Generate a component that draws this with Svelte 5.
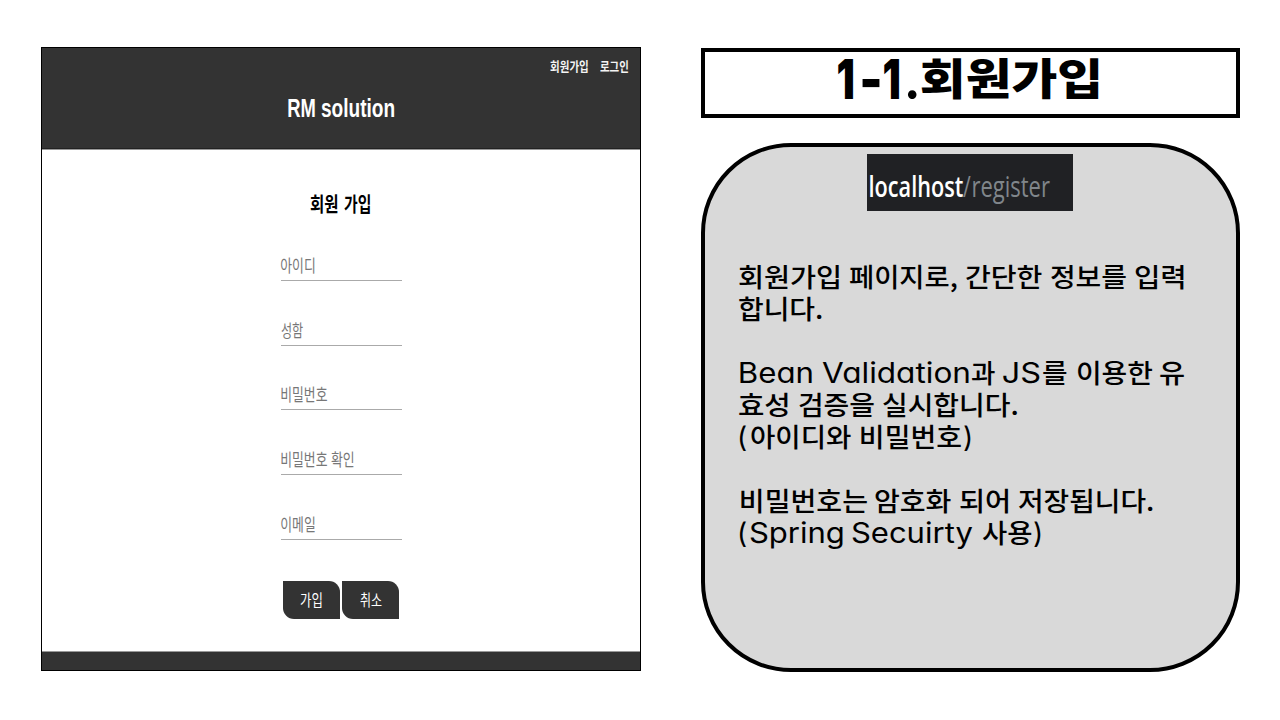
<script>
  // Text runs are [text, left, right, class?], in pixels inside their line.
  const nav = [['회원가입', 508, 546], ['로그인', 558, 586]];
  const brand = [['RM', 245.5, 272.5], ['solution', 279, 352]];
  const formTitle = [['회원', 268, 296], ['가입', 301.5, 327.5]];
  const fields = [
    [['아이디', 0, 33.5]],
    [['성함', 0, 22.5]],
    [['비밀번호', 0, 46]],
    [['비밀번호', 0, 46], ['확인', 50, 72.5]],
    [['이메일', 0, 33.5]],
  ];
  const buttons = [[['가입', 17, 38.5]], [['취소', 17.5, 39]]];
  const heading = [
    ['1', 132.5, 148, 'num'],
    ['-', 157, 175, 'num'],
    ['1', 179, 194.5, 'num'],
    ['.', 203, 212.5, 'dot'],
    ['회원가입', 216, 394, 'ko'],
  ];
  const address = [['localhost', 2.5, 95.5, 'host'], ['/', 96, 104], ['register', 106, 183]];
  const lines = [
    [['회원가입', 34, 134], ['페이지로,', 144, 252], ['간단한', 261, 337.5], ['정보를', 345.5, 420.5], ['입력', 430, 478.5]],
    [['합니다.', 34, 116.5]],
    [],
    [['Bean', 35, 106, 'latin'], ['Validation', 117, 261, 'latin'], ['과', 266, 290.5], ['JS', 298, 335, 'latin'], ['를', 337.5, 361], ['이용한', 371.5, 447.5], ['유', 455, 479]],
    [['효성', 34, 82.5], ['검증을', 93.5, 168.5], ['실시합니다.', 177.5, 311.5]],
    [['(', 34, 41, 'latin'], ['아이디와', 45.5, 146], ['비밀번호', 155.5, 255.5], [')', 259, 266, 'latin']],
    [],
    [['비밀번호는', 35.5, 161.5], ['암호화', 170, 246.5], ['되어', 254.5, 302.5], ['저장됩니다.', 313, 447.5]],
    [['(', 34, 41, 'latin'], ['Spring', 44.5, 137, 'latin'], ['Secuirty', 147, 267, 'latin'], ['사용', 276.5, 326], [')', 329, 336, 'latin']],
  ];

  // Stretches a run so that its ink spans exactly the given width.
  function fit(node, width) {
    const style = getComputedStyle(node);
    const ctx = document.createElement('canvas').getContext('2d');
    ctx.font = `${style.fontWeight} ${style.fontSize} ${style.fontFamily}`;
    const m = ctx.measureText(node.textContent);
    const ink = m.actualBoundingBoxLeft + m.actualBoundingBoxRight;
    const scale = width / ink;
    node.style.transform = `translateX(${m.actualBoundingBoxLeft * scale}px) scaleX(${scale})`;
  }
</script>

{#snippet run(parts)}
  {#each parts as [text, left, right, kind], i}
    <span class="seg" style="margin-left:{left - (i ? parts[i - 1][2] : 0)}px;width:{right - left}px"><span class="ink {kind ?? ''}" use:fit={right - left}>{text}</span></span>
  {/each}
{/snippet}

<main class="slide">
  <section class="preview">
    <header>
      <nav class="line">{@render run(nav)}</nav>
      <h1 class="line">{@render run(brand)}</h1>
    </header>
    <div class="form">
      <h2 class="line">{@render run(formTitle)}</h2>
      <div class="fields">
        {#each fields as field}
          <div class="field line">{@render run(field)}</div>
        {/each}
      </div>
      <div class="actions">
        {#each buttons as button}
          <button class="line">{@render run(button)}</button>
        {/each}
      </div>
    </div>
    <footer></footer>
  </section>

  <section class="notes">
    <h1 class="heading line">{@render run(heading)}</h1>
    <article>
      <div class="address line">{@render run(address)}</div>
      <div class="copy">
        {#each lines as parts}
          <p class="line">{@render run(parts)}</p>
        {/each}
      </div>
    </article>
  </section>
</main>

<style>
  :global(body) { margin: 0; background: #fff; }
  * { box-sizing: border-box; }
  h1, h2, p { margin: 0; }
  .slide {
    width: 1280px; height: 720px; padding: 47px 40px 0 41px; overflow: hidden;
    display: flex; gap: 60px; align-items: flex-start; background: #fff;
    font-family: "Noto Sans CJK KR", sans-serif; color: #000;
  }
  .line { display: flex; align-items: baseline; white-space: pre; }
  .seg { flex: none; display: block; overflow: visible; }
  .ink { display: inline-block; transform-origin: 0 50%; }

  .preview {
    width: 600px; height: 624px; border: 1px solid #000; background: #fff;
    display: flex; flex-direction: column;
  }
  header { height: 102px; background: #333; color: #fff; border-bottom: 1px solid #999; box-shadow: inset 0 -1px #222; }
  nav { height: 38px; padding-top: 8px; font-size: 13px; line-height: 20px; font-weight: 700; color: #f4f4f4; }
  header h1 { font: 700 25.5px/44px "Liberation Sans", Arial, sans-serif; }
  .form { flex: 1; padding-top: 38px; }
  h2 { height: 30px; font-size: 20.5px; line-height: 30px; font-weight: 700; }
  .fields { width: 121px; margin: 31px 0 0 239px; display: grid; gap: 32.7px; }
  .field { height: 32px; font-size: 17px; line-height: 32px; color: #777; border-bottom: 1.5px solid #aaa; }
  .actions { display: flex; gap: 2px; margin: 41px 0 0 241px; }
  button {
    width: 57px; height: 38px; padding: 0; border: 0; background: #333; color: #fff;
    border-radius: 0 11px 0 11px; font: 400 16px/36px "Noto Sans CJK KR", sans-serif; text-align: left;
  }
  footer { height: 19px; background: #333; border-top: 1px solid #999; }

  .notes { width: 539px; padding-top: 1px; }
  .heading { height: 70px; border: 4px solid #000; font-size: 43px; line-height: 56px; font-weight: 900; }
  .num { font: 900 55px/50px Inter, sans-serif; }
  .dot { font: 900 55px/50px Lato, sans-serif; }
  .ko { position: relative; top: -4px; }
  article {
    height: 529px; margin-top: 25px; padding-top: 7px; border: 4px solid #000;
    border-radius: 90px; background: #d9d9d9;
  }
  .address {
    width: 206px; height: 57px; margin-left: 162px; background: #202124; color: #80868b;
    font: 400 29px/64px "Open Sans", sans-serif;
  }
  .host { color: #fff; font-weight: 600; }
  .copy { margin-top: 49px; }
  .copy .line { height: 32px; font-size: 26px; line-height: 32px; font-weight: 500; }
  .copy .latin { font: 400 28px/26px Inter, sans-serif; font-feature-settings: "cv11"; }
</style>
